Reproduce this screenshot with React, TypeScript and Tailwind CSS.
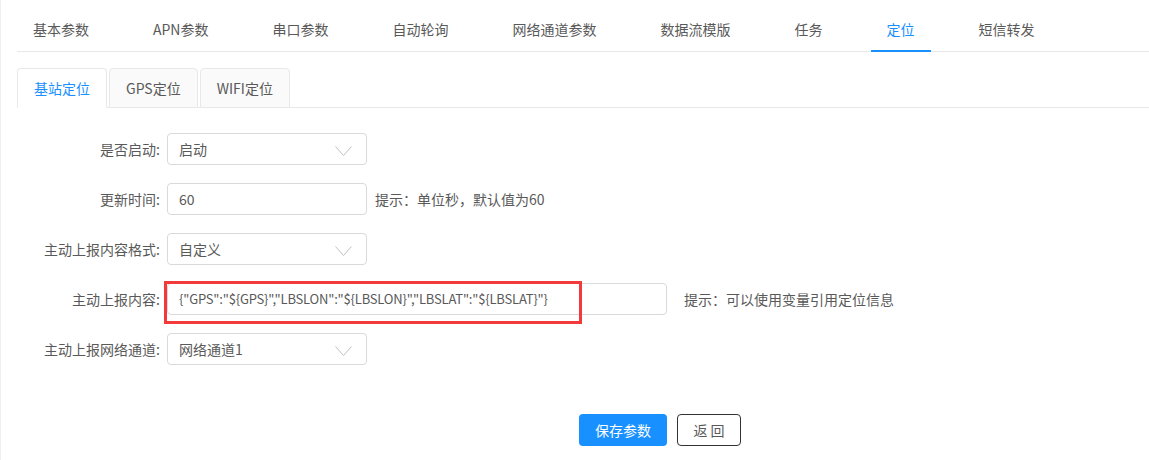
const topTabs = ["基本参数", "APN参数", "串口参数", "自动轮询", "网络通道参数", "数据流模版", "任务", "定位", "短信转发"];
const subTabs = ["基站定位", "GPS定位", "WIFI定位"];

function Chevron() {
  return (
    <svg width="17" height="10" viewBox="0 0 17 10" className="absolute right-[14px] top-[12px]">
      <path d="M0.5 0.5 L8.5 9.5 L16.5 0.5" fill="none" stroke="#bfbfbf" strokeWidth="1" />
    </svg>
  );
}

function Row({ label, children }: { label: string; children: React.ReactNode }) {
  return (
    <div className="flex items-center h-8">
      <div className="w-[150px] pr-[7px] text-right text-[#595959]">{label}:</div>
      {children}
    </div>
  );
}

function Select({ value }: { value: string }) {
  return (
    <div className="relative w-[200px] h-8 border border-[#d9d9d9] rounded bg-white flex items-center pl-[11px] text-[#595959]">
      {value}
      <Chevron />
    </div>
  );
}

export default function App() {
  return (
    <div
      className="h-[460px] bg-white border-l border-[#eeeeee] pl-4 text-[14px] text-[#595959] overflow-hidden"
      style={{ fontFamily: '"Noto Sans CJK SC", "Noto Sans", sans-serif' }}
    >
      <div className="flex border-b border-[#e8e8e8]">
        {topTabs.map((t, i) => (
          <div
            key={t}
            className={
              "relative px-4 pt-[19px] pb-[11px] leading-[21px] mr-8 " +
              (i === 7 ? "text-[#1890ff]" : "text-[#595959]")
            }
          >
            {t}
            {i === 7 && <span className="absolute left-0 right-0 bottom-[-1px] h-[2px] bg-[#1890ff]" />}
          </div>
        ))}
      </div>

      <div className="flex gap-[2px] mt-4 border-b border-[#e8e8e8]">
        {subTabs.map((t, i) => (
          <div
            key={t}
            className={
              "h-10 -mb-px px-4 flex items-center border border-[#e8e8e8] rounded-t " +
              (i === 0 ? "bg-white border-b-white text-[#1890ff]" : "bg-[#fafafa] text-[#595959]")
            }
          >
            {t}
          </div>
        ))}
      </div>

      <div className="flex flex-col gap-[18px] mt-[25px]">
        <Row label="是否启动">
          <Select value="启动" />
        </Row>
        <Row label="更新时间">
          <div className="w-[200px] h-8 border border-[#d9d9d9] rounded flex items-center pl-[11px]">60</div>
          <span className="ml-2">提示：单位秒，默认值为60</span>
        </Row>
        <Row label="主动上报内容格式">
          <Select value="自定义" />
        </Row>
        <Row label="主动上报内容">
          <div className="relative w-[500px] h-8 border border-[#d9d9d9] rounded flex items-center pl-[11px] text-[13px] tracking-[-0.2px]">
            {'{"GPS":"${GPS}","LBSLON":"${LBSLON}","LBSLAT":"${LBSLAT}"}'}
            <div className="absolute left-[-4px] top-[-3px] w-[418px] h-[43px] border-[3px] border-[#f23a3a]" />
          </div>
          <span className="ml-[17px]">提示：可以使用变量引用定位信息</span>
        </Row>
        <Row label="主动上报网络通道">
          <Select value="网络通道1" />
        </Row>
      </div>

      <div className="flex gap-[10px] mt-[49px] pl-[562px]">
        <button className="w-[88px] h-8 rounded bg-[#1890ff] text-white">保存参数</button>
        <button className="w-[64px] h-8 rounded border border-[#333333] bg-white text-[#595959]">返 回</button>
      </div>
    </div>
  );
}
